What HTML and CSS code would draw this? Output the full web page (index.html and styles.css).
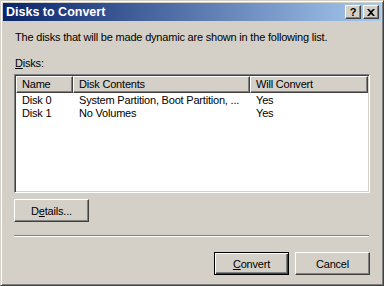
FILE: index.html
```html
<!DOCTYPE html>
<html lang="en">
  <head>
    <meta charset="UTF-8" />
    <title>Disks to Convert</title>
    <link rel="stylesheet" href="styles.css">
  </head>
  <body>
    <div class="window">
      <div class="title-bar">
        <span class="title-text">Disks to Convert</span>
        <div class="title-buttons">
          <span class="caption-btn help">?</span>
          <span class="caption-btn close">
            <svg width="8" height="7" viewBox="0 0 8 7">
              <path d="M0 0h2l2 2 2-2h2L5 3.5 8 7H6L4 5 2 7H0l3-3.5z" fill="#000"/>
            </svg>
          </span>
        </div>
      </div>
      <div class="content">
        <p class="intro">The disks that will be made dynamic are shown in the following list.</p>
        <p class="list-label"><u>D</u>isks:</p>
        <div class="list-view">
          <div class="list-header">
            <span class="col col-name">Name</span>
            <span class="col col-contents">Disk Contents</span>
            <span class="col col-convert">Will Convert</span>
          </div>
          <div class="list-row">
            <span class="cell col-name">Disk 0</span>
            <span class="cell col-contents">System Partition, Boot Partition, ...</span>
            <span class="cell col-convert">Yes</span>
          </div>
          <div class="list-row">
            <span class="cell col-name">Disk 1</span>
            <span class="cell col-contents">No Volumes</span>
            <span class="cell col-convert">Yes</span>
          </div>
        </div>
        <div class="details-row">
          <button class="btn">D<u>e</u>tails...</button>
        </div>
        <div class="separator"></div>
        <div class="footer">
          <button class="btn btn-default"><u>C</u>onvert</button>
          <button class="btn">Cancel</button>
        </div>
      </div>
    </div>
  </body>
</html>
```

FILE: styles.css
```css
html,
body {
  margin: 0;
  padding: 0;
  background: #d4d0c8;
}

.window {
  width: 384px;
  height: 286px;
  box-sizing: border-box;
  background: #d4d0c8;
  border-top: 1px solid #d4d0c8;
  border-left: 1px solid #d4d0c8;
  border-right: 1px solid #404040;
  border-bottom: 1px solid #404040;
  box-shadow: inset 1px 1px 0 #fff, inset -1px -1px 0 #808080;
  padding: 2px;
  font: 11px "Liberation Sans", Arial, sans-serif;
  letter-spacing: -0.2px;
  color: #000;
  display: flex;
  flex-direction: column;
}

.title-bar {
  height: 18px;
  background: linear-gradient(to right, #0a246a, #a6caf0);
  display: flex;
  align-items: center;
  justify-content: space-between;
  padding: 0 2px 0 3px;
}
.title-text {
  color: #fff;
  font-weight: bold;
  font-size: 12.5px;
  letter-spacing: 0;
}
.title-buttons {
  display: flex;
  gap: 2px;
}
.caption-btn {
  width: 16px;
  height: 14px;
  box-sizing: border-box;
  background: #d4d0c8;
  border-top: 1px solid #fff;
  border-left: 1px solid #fff;
  border-right: 1px solid #404040;
  border-bottom: 1px solid #404040;
  box-shadow: inset -1px -1px 0 #808080;
  display: flex;
  align-items: center;
  justify-content: center;
  font-weight: bold;
  font-size: 11px;
  line-height: 1;
}

.content {
  flex: 1;
  padding: 0 11px;
  display: flex;
  flex-direction: column;
}
.intro {
  margin: 10px 0 0 1px;
  line-height: 13px;
}
.list-label {
  margin: 13px 0 0 1px;
  line-height: 13px;
}

.list-view {
  margin-top: 4px;
  height: 119px;
  box-sizing: border-box;
  background: #fff;
  border-top: 1px solid #808080;
  border-left: 1px solid #808080;
  border-right: 1px solid #fff;
  border-bottom: 1px solid #fff;
  box-shadow: inset 1px 1px 0 #404040, inset -1px -1px 0 #d4d0c8;
  padding: 1px;
}
.list-header {
  display: flex;
  height: 17px;
}
.list-header .col {
  box-sizing: border-box;
  background: #d4d0c8;
  border-top: 1px solid #fff;
  border-left: 1px solid #fff;
  border-right: 1px solid #404040;
  border-bottom: 1px solid #404040;
  box-shadow: inset -1px -1px 0 #808080;
  padding-left: 5px;
  line-height: 14px;
}
.col-name {
  width: 57px;
}
.col-contents {
  width: 177px;
}
.col-convert {
  width: 118px;
}
.list-row {
  display: flex;
  line-height: 13px;
}
.list-header + .list-row {
  margin-top: 1px;
}
.list-row .cell {
  padding-left: 6px;
  box-sizing: border-box;
  white-space: nowrap;
  overflow: hidden;
}

.details-row {
  margin-top: 6px;
}
.btn {
  width: 75px;
  height: 23px;
  box-sizing: border-box;
  background: #d4d0c8;
  border-top: 1px solid #fff;
  border-left: 1px solid #fff;
  border-right: 1px solid #404040;
  border-bottom: 1px solid #404040;
  box-shadow: inset -1px -1px 0 #808080;
  font: 11px "Liberation Sans", Arial, sans-serif;
  letter-spacing: -0.2px;
  color: #000;
  padding: 0;
}
.btn-default {
  border: 1px solid #000;
  box-shadow: inset 1px 1px 0 #fff, inset -1px -1px 0 #404040, inset -2px -2px 0 #808080;
}

.separator {
  margin-top: 13px;
  height: 1px;
  background: #808080;
  border-bottom: 1px solid #fff;
  margin-right: 1px;
}
.footer {
  margin-top: 15px;
  display: flex;
  justify-content: flex-end;
  gap: 6px;
}
```
